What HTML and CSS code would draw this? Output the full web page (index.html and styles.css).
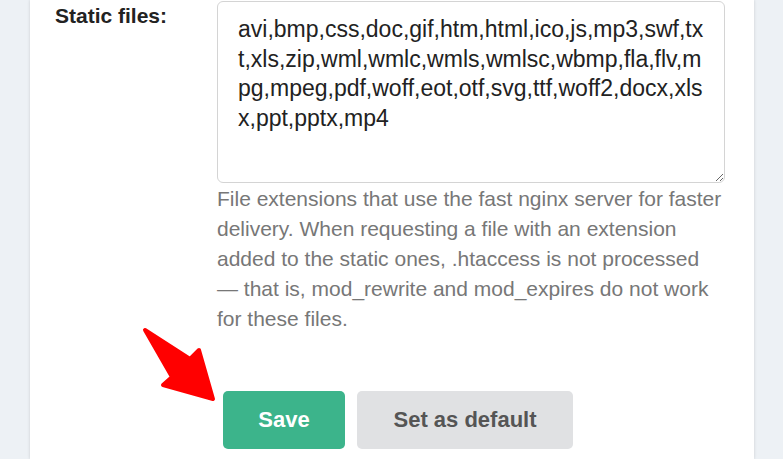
FILE: index.html
```html
<!DOCTYPE html>
<html lang="en">

<head>
  <meta charset="UTF-8">
  <title>Static files</title>

  <link rel="stylesheet" href="styles.css">
</head>

<body>
  <div class="card">
    <div class="form-row">
      <label class="form-label" for="static">Static files:</label>
      <div class="form-field">
        <textarea id="static" class="field-input">avi,bmp,css,doc,gif,htm,html,ico,js,mp3,swf,txt,xls,zip,wml,wmlc,wmls,wmlsc,wbmp,fla,flv,mpg,mpeg,pdf,woff,eot,otf,svg,ttf,woff2,docx,xlsx,ppt,pptx,mp4</textarea>
        <p class="field-help">File extensions that use the fast nginx server for faster delivery. When requesting a file with an extension added to the static ones, .htaccess is not processed — that is, mod_rewrite and mod_expires do not work for these files.</p>
      </div>
    </div>

    <div class="form-actions">
      <button type="submit" class="btn btn-primary">Save</button>
      <button type="button" class="btn btn-secondary">Set as default</button>
    </div>

    <!-- annotation arrow -->
    <svg class="arrow" width="90" height="90" viewBox="0 0 90 90">
      <polygon points="5,7 50,36 59,27 73,76 23,62 32,54" fill="#ff0000" stroke="#ff0000" stroke-width="4" stroke-linejoin="round"/>
    </svg>
  </div>
</body>

</html>
```

FILE: styles.css
```css
body {
  font-family: 'Liberation Sans', Arial, sans-serif;
  background: #edf1f5;
  color: #222;
  margin: 0;
  padding: 0;
}

.card {
  position: relative;
  width: 724px;
  height: 459px;
  margin-left: 30px;
  background: white;
  box-shadow: 0 0 3px rgba(0, 0, 0, 0.15);
  box-sizing: border-box;
  padding-top: 1px;
}

.form-row {
  display: flex;
}

.form-label {
  width: 162px;
  padding-left: 25px;
  font-size: 21px;
  line-height: 30px;
  font-weight: bold;
  color: #222;
}

.form-field {
  width: 508px;
}

.field-input {
  display: block;
  width: 508px;
  height: 182px;
  box-sizing: border-box;
  margin: 0;
  padding: 13px 20px;
  border: 1px solid #d4d4d4;
  border-radius: 6px;
  font-family: 'Liberation Sans', Arial, sans-serif;
  font-size: 23px;
  line-height: 29.5px;
  color: #222;
  outline: none;
}

.field-help {
  margin: 1px 0 0;
  font-size: 21px;
  line-height: 30px;
  color: #777;
}

.form-actions {
  display: flex;
  gap: 12px;
  margin-top: 57px;
  padding-left: 193px;
}

.btn {
  height: 58px;
  border: none;
  border-radius: 5px;
  font-family: 'Liberation Sans', Arial, sans-serif;
  font-size: 22px;
  font-weight: bold;
  cursor: pointer;
}

.btn-primary {
  width: 122px;
  background: #3cb48b;
  color: white;
}

.btn-secondary {
  width: 216px;
  background: #e0e1e3;
  color: #555;
}

.arrow {
  position: absolute;
  left: 110px;
  top: 323px;
}
```
